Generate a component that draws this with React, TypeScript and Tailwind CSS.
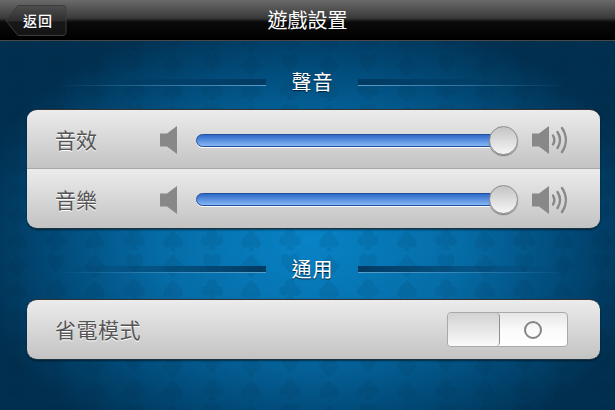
function SuitPattern() {
  return (
    <svg className="absolute inset-0 w-full h-full" aria-hidden="true">
      <defs>
        <pattern id="suits" width="78" height="50" patternUnits="userSpaceOnUse" x="4" y="2">
          <path d="M13 2 L24 14 L13 26 L2 14 Z" fill="#001e38" fillOpacity="0.09" />
          <path d="M52 4c4-4 9-2 9 3 0 6-6 10-9 14-3-4-9-8-9-14 0-5 5-7 9-3Z" fill="#001e38" fillOpacity="0.09" />
          <path d="M13 28c5 5 10 9 10 14 0 4-6 5-9 2l2 5h-6l2-5c-3 3-9 2-9-2 0-5 5-9 10-14Z" fill="#001e38" fillOpacity="0.09" />
          <path d="M52 27a5 5 0 0 1 5 7 5 5 0 1 1-3 8l2 6h-8l2-6a5 5 0 1 1-3-8 5 5 0 0 1 5-7Z" fill="#001e38" fillOpacity="0.09" />
        </pattern>
      </defs>
      <rect width="100%" height="100%" fill="url(#suits)" />
    </svg>
  );
}

function BackButton() {
  return (
    <button className="relative w-[62px] h-[31px] text-white text-[14px] tracking-[1px] pl-[4px] font-medium">
      <svg className="absolute inset-0" width="62" height="31" viewBox="0 0 62 31" aria-hidden="true">
        <defs>
          <linearGradient id="backFill" x1="0" y1="0" x2="0" y2="1">
            <stop offset="0" stopColor="#4f4f4f" />
            <stop offset="0.5" stopColor="#2e2e2e" />
            <stop offset="0.55" stopColor="#171717" />
            <stop offset="1" stopColor="#141414" />
          </linearGradient>
        </defs>
        <path
          d="M13 .5H58a3 3 0 0 1 3 3v24a3 3 0 0 1-3 3H13L.8 15.5Z"
          fill="url(#backFill)"
          stroke="#3c3c3c"
        />
      </svg>
      <span className="relative">返回</span>
    </button>
  );
}

function Speaker({ loud }: { loud?: boolean }) {
  return (
    <svg width={loud ? 36 : 18} height="30" viewBox={loud ? '0 0 36 30' : '0 0 18 30'} className="shrink-0" aria-hidden="true">
      <path d="M0 8.500H7L17 1V29L7 21.500H0Z" fill="#888888" />
      {loud && (
        <g fill="none" stroke="#888888" strokeWidth="2.4" strokeLinecap="round">
          <path d="M21 10.500c1.800 3 1.800 6 0 9" />
          <path d="M25.500 7c3.200 5 3.200 11 0 16" />
          <path d="M30 3c5 7.500 5 16.500 0 24" />
        </g>
      )}
    </svg>
  );
}

function SliderRow({ label, divided }: { label: string; divided?: boolean }) {
  return (
    <div
      className={`h-[59px] flex items-center pt-[2px] pl-[28px] pr-[32px] bg-gradient-to-b from-[#ececec] to-[#c3c3c3] ${
        divided ? 'border-b border-[#a8a8a8]' : ''
      }`}
    >
      <span className="w-[105px] text-[21px] text-[#555555] [text-shadow:0_1px_0_#ffffff]">{label}</span>
      <Speaker />
      <div className="relative flex-1 ml-[18px] mr-[27px] h-[13px] rounded-full border border-[#23509c] bg-gradient-to-b from-[#2d68c8] to-[#86b6f4] shadow-[0_1px_0_#ffffff]">
        <div className="absolute right-[-14px] top-[-9px] w-[29px] h-[29px] rounded-full border border-[#8e8e8e] bg-gradient-to-b from-[#c4c4c4] to-[#f6f6f6] shadow-[0_1px_1px_#777777]" />
      </div>
      <Speaker loud />
    </div>
  );
}

function TitleRule({ flip }: { flip?: boolean }) {
  return (
    <div className="w-[210px] flex flex-col">
      <div className={`h-[6px] from-transparent to-[#023a62] ${flip ? 'bg-gradient-to-l' : 'bg-gradient-to-r'}`} />
      <div className={`h-px from-transparent to-[#5b9dc6] ${flip ? 'bg-gradient-to-l' : 'bg-gradient-to-r'}`} />
    </div>
  );
}

function SectionTitle({ title }: { title: string }) {
  return (
    <div className="flex items-center justify-center h-[30px] pr-[3px]">
      <TitleRule />
      <span className="w-[92px] pl-[1px] text-center text-[20px] tracking-[1px] text-white [text-shadow:0_1px_1px_#00243f]">{title}</span>
      <TitleRule flip />
    </div>
  );
}

export default function App() {
  return (
    <div
      className="relative w-[615px] h-[410px] overflow-hidden bg-[radial-gradient(ellipse_345px_235px_at_310px_240px,#0883c6_0%,#056ba5_45%,#014a78_75%,#012f4f_100%)]"
      style={{ fontFamily: '"Noto Sans CJK TC", "Noto Sans", sans-serif' }}
    >
      <SuitPattern />
      <div className="relative">
        <header className="relative h-[41px] flex items-center pl-[5px] border-b border-[#4a4a4a] bg-[linear-gradient(#6a6a6a_0%,#3a3a3a_45%,#0a0a0a_55%,#000000_100%)]">
          <BackButton />
          <h1 className="absolute inset-x-0 text-center text-[20px] text-white">遊戲設置</h1>
        </header>

        <div className="pl-[27px] pr-[15px] pt-[26px]">
          <SectionTitle title="聲音" />
          <div className="mt-[12px] rounded-[10px] overflow-hidden border-t border-b border-t-[#333333] border-b-[#1c3342] shadow-[0_1px_2px_#00000080]">
            <SliderRow label="音效" divided />
            <SliderRow label="音樂" />
          </div>

          <div className="mt-[25px]">
            <SectionTitle title="通用" />
          </div>
          <div className="mt-[15px] h-[61px] flex items-center justify-between pl-[28px] pr-[32px] rounded-[10px] border-t border-b border-t-[#333333] border-b-[#1c3342] bg-gradient-to-b from-[#ececec] to-[#c3c3c3] shadow-[0_1px_2px_#00000080]">
            <span className="text-[21px] tracking-[0.5px] text-[#555555] [text-shadow:0_1px_0_#ffffff]">省電模式</span>
            <div className="flex w-[121px] h-[35px] rounded-[4px] border border-[#a9a9a9] bg-gradient-to-b from-[#e6e6e6] via-[#fafafa] to-[#ffffff]">
              <div className="w-[52px] rounded-[4px] border-r border-[#8f8f8f] bg-gradient-to-b from-[#d2d2d2] to-[#fbfbfb]" />
              <div className="flex-1 flex items-center justify-center pr-[2px]">
                <div className="w-[18px] h-[18px] rounded-full border-[2.5px] border-[#858585]" />
              </div>
            </div>
          </div>
        </div>
      </div>
    </div>
  );
}
